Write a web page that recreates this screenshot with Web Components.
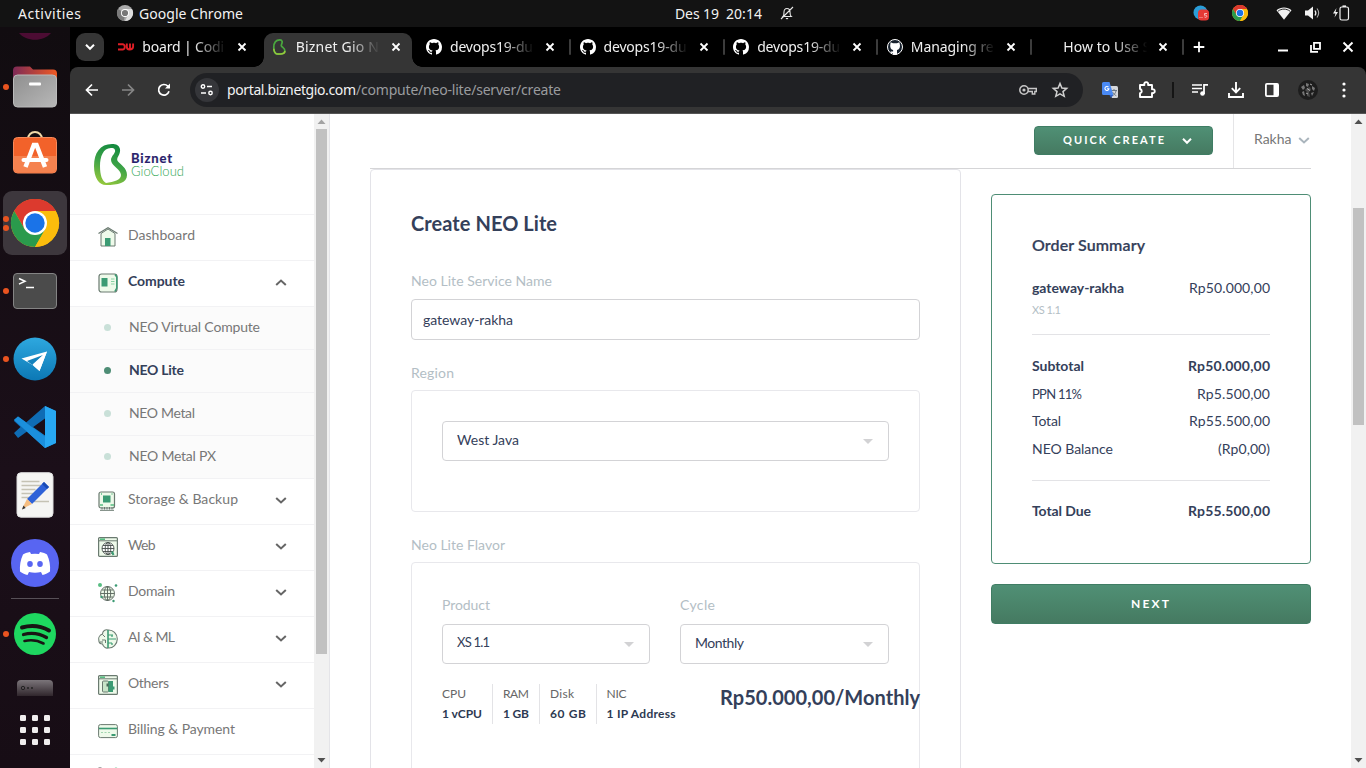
<!DOCTYPE html>
<html lang="id">
<head>
<meta charset="utf-8">
<title>Biznet Gio NEO Lite</title>
<style>
html,body{margin:0;height:100%;overflow:hidden;background:#fff}
body{font-family:Lato,"Liberation Sans",sans-serif;font-size:14px}
</style>
</head>
<body>
<desk-top></desk-top>
<script>
const define = (name, css, html) => {
  customElements.define(name, class extends HTMLElement {
    constructor() {
      super();
      const t = document.createElement('template');
      const markup = typeof html === 'function' ? html(this) : html;
      t.innerHTML = `<style>*{box-sizing:border-box}:host{box-sizing:border-box}svg{display:block;overflow:visible}${css}</style>${markup}`;
      this.attachShadow({mode: 'open'}).append(t.content.cloneNode(true));
    }
  });
};
const attr = (el, n, d = '') => el.getAttribute(n) ?? d;

/* ---------- icon library ---------- */
const wrap = (w, h, body, extra = '') => `<svg width="${w}" height="${h}" viewBox="0 0 ${w} ${h}" fill="none" ${extra}>${body}</svg>`;
const chromeMark = (s) => `<svg width="${s}" height="${s}" viewBox="0 0 48 48"><circle cx="24" cy="24" r="24" fill="#fbbc0c"/><path d="M24 24 3.2 12A24 24 0 0 1 44.8 12Z" fill="#dc3a2e"/><path d="M24 12H44.8A24 24 0 0 0 3.2 12L13.6 30Z" fill="#dc3a2e"/><path d="M3.2 12A24 24 0 0 0 24 48L34.4 30 24 36 13.6 30Z" fill="#2a9a4c"/><path d="M24 48A24 24 0 0 0 44.8 12H24L34.4 30Z" fill="#fbbc0c"/><circle cx="24" cy="24" r="12" fill="#fff"/><circle cx="24" cy="24" r="9.7" fill="#1a73e8"/></svg>`;
const octo = '<path fill="#fff" d="M8 0C3.58 0 0 3.58 0 8c0 3.54 2.29 6.53 5.47 7.59.4.07.55-.17.55-.38 0-.19-.01-.82-.01-1.49-2.01.37-2.53-.49-2.69-.94-.09-.23-.48-.94-.82-1.13-.28-.15-.68-.52-.01-.53.63-.01 1.08.58 1.23.82.72 1.21 1.87.87 2.33.66.07-.52.28-.87.51-1.07-1.78-.2-3.64-.89-3.64-3.95 0-.87.31-1.59.82-2.15-.08-.2-.36-1.02.08-2.12 0 0 .67-.21 2.2.82.64-.18 1.32-.27 2-.27s1.36.09 2 .27c1.53-1.04 2.2-.82 2.2-.82.44 1.1.16 1.92.08 2.12.51.56.82 1.27.82 2.15 0 3.07-1.87 3.75-3.65 3.95.29.25.54.73.54 1.48 0 1.07-.01 1.93-.01 2.2 0 .21.15.46.55.38A8.01 8.01 0 0 0 16 8c0-4.42-3.58-8-8-8Z"/>';
const G = '#3b9b73', P = '#eefaea', K = '#6a7a70';
const icons = {
  close: wrap(10, 10, '<path d="M1.5 1.5l7 7M8.5 1.5l-7 7" stroke="#fff" stroke-width="1.8"/>'),
  close12: wrap(12, 12, '<path d="M1.5 1.5l9 9M10.5 1.5l-9 9" stroke="#fff" stroke-width="1.9"/>'),
  plus: wrap(12, 12, '<path d="M6 .7v10.600M.7 6h10.600" stroke="#fff" stroke-width="1.8"/>'),
  dw: wrap(16, 16, '<path d="M0 5.3h4.5a2.1 2.1 0 0 1 2.2 2.2v.8a2.1 2.1 0 0 1-2.2 2.2H0M8.8 4.5v3.3c0 2 .6 2.7 2.6 2.7s3.7-.7 3.7-2.7V4.5M12 4.5v5" stroke="#e01e26" stroke-width="1.9"/>'),
  octo: wrap(16, 16, octo),
  octo2: wrap(16, 16, '<circle cx="8" cy="8" r="7.5" fill="#16202c" stroke="#fff"/><path fill="#fff" d="M3.6 3.2 6 4.2h4l2.4-1 .6 3.300c0 2.700-1 4-3 4.500v4.700H6v-1.600H4.400l-.9-1.500h2.600v-1.600C4 10.500 3.100 8.800 3.200 6.500Z"/>'),
  biz: '<svg width="13" height="16" viewBox="0 0 34 41"><path d="M18 2C7 2 2 11 2 22s4 17 10 17c10 0 19-2 19-9 0-6-6-8-9-12-2-4 3-6 2-12-1-3-3-4-6-4Z" fill="none" stroke="#4aa83f" stroke-width="4.500"/><path d="M2 25c1 8 4 14 11 14s19 0 18-8" fill="none" stroke="#96c83c" stroke-width="4"/></svg>',
  down: wrap(10, 6, '<path d="M1 .8l4 4 4-4" stroke="currentColor" stroke-width="2"/>'),
  down12: wrap(12, 7, '<path d="M1.200 1l4.800 4.500L10.800 1" stroke="currentColor" stroke-width="2"/>'),
  up12: wrap(12, 7, '<path d="M1.200 6l4.800-4.500L10.800 6" stroke="currentColor" stroke-width="2"/>'),
  back: wrap(14, 14, '<path d="M13 7H2M7 1.500 1.500 7 7 12.500" stroke="#fff" stroke-width="1.7"/>'),
  fwd: wrap(14, 14, '<path d="M1 7h11M7 1.500 12.500 7 7 12.500" stroke="#868686" stroke-width="1.7"/>'),
  reload: wrap(14, 14, '<path d="M12 8.300A5.300 5.300 0 1 1 10.800 3.200L12.200 4.600" stroke="#fff" stroke-width="1.700"/><path d="M13 .5v5H8Z" fill="#fff"/>'),
  tune: wrap(14, 12, '<circle cx="3" cy="2.500" r="1.700" stroke="#fff" stroke-width="1.400"/><path d="M7 2.500h5M1 9h5" stroke="#fff" stroke-width="1.700"/><circle cx="10.500" cy="9" r="1.700" stroke="#fff" stroke-width="1.400"/>'),
  key: wrap(18, 11, '<circle cx="5" cy="5" r="4.200" stroke="#c7c7c7" stroke-width="1.500"/><circle cx="5" cy="5" r="1.600" fill="#c7c7c7"/><path d="M9 3.500h8.300v3H15.800V9h-2.500V6.500H9" stroke="#c7c7c7" stroke-width="1.400"/>'),
  star: wrap(16, 16, '<path d="M8 1.500 9.900 6l4.800.4-3.700 3.200 1.200 4.700L8 11.800l-4.200 2.500L5 9.600 1.300 6.400 6.100 6Z" stroke="#d0d0d0" stroke-width="1.500"/>'),
  translate: wrap(16, 16, '<path d="M6 4h8.500a1.500 1.500 0 0 1 1.500 1.500V14.500a1.500 1.500 0 0 1-1.500 1.500H10Z" fill="#d6d8dc"/><path d="M9 8.500h6M12 7v1.500M14 9c-.5 2.300-2 4-3.700 4.700M10.500 10c1 2 2.300 3 3.800 3.700" stroke="#6e7a87" stroke-width="1"/><path d="M1.500 0H7.500l3.800 13H1.500A1.500 1.500 0 0 1 0 11.500v-10A1.500 1.500 0 0 1 1.500 0Z" fill="#4a8af4"/><path d="M7.500 13h3.800L9 16Z" fill="#2e62c8"/><path d="M6.500 5.200A2 2 0 1 0 6.900 6.800H5" stroke="#fff" stroke-width="1.100"/>'),
  puzzle: wrap(18, 18, '<path d="M2 4h4.400a2 2 0 1 1 3.600 0H14v4.300a2 2 0 1 1 0 3.700V16H2v-3.700a2.200 2.200 0 0 0 0-4.300Z" stroke="#fff" stroke-width="1.900" stroke-linejoin="round"/>'),
  queue: wrap(16, 14, '<path d="M0 2h10M0 5.500h10M0 9h6" stroke="#fff" stroke-width="1.700"/><path d="M12 11V1.800h4" stroke="#fff" stroke-width="1.800"/><circle cx="10.500" cy="10.500" r="2.300" fill="#fff"/>'),
  download: wrap(16, 16, '<path d="M8 0v10M3.800 6.200 8 10.400l4.200-4.200M1 11v4h14v-4" stroke="#fff" stroke-width="1.900"/>'),
  panel: wrap(14, 14, '<rect x=".9" y=".9" width="12.200" height="12.200" rx="1" stroke="#fff" stroke-width="1.800"/><path d="M8.500 1h4.500v12H8.500Z" fill="#fff"/>'),
  face: wrap(20, 20, '<circle cx="10" cy="10" r="10" fill="#1d1d1d"/><g fill="#777"><path d="M3 7l3-2 1 3-2 2ZM8 3l3 1-1 3-2-1ZM4 12l2-1 1 5-2-1ZM14 6l3 2-1 3-2-2ZM13 13l3-1-2 4Z"/></g><path d="M9 8l3-1 1 3-2 2 1 5-3-1v-4l-2-2Z" fill="#4a4a4a"/><path d="M9 8.500l3 2M12 4l2 1M8 13l2 1" stroke="#aaa"/>'),
  dots: wrap(4, 16, '<g fill="#fff"><circle cx="2" cy="2" r="1.600"/><circle cx="2" cy="8" r="1.600"/><circle cx="2" cy="14" r="1.600"/></g>'),
  min: wrap(10, 12, '<path d="M0 9.500h10" stroke="#fff" stroke-width="2"/>'),
  restore: wrap(11, 11, '<path d="M4 .9h6v6H4ZM1 3v6.900h7" stroke="#fff" stroke-width="1.800"/>'),
  bell: wrap(14, 14, '<path d="M3 10.500c1-1 1-2 1-4.500 0-2 1-3.500 3-3.500s3 1.500 3 3.500c0 2.500 0 3.500 1.200 4.500ZM1 13 13 1" stroke="#e8e8e8" stroke-width="1.100"/><path d="M5.500 12h3L7 13.500Z" fill="#fff"/>'),
  gray: wrap(16, 16, '<circle cx="8" cy="8" r="8" fill="#aaa"/><path d="M8 8 1 4a8 8 0 0 0 6 12Z" fill="#7a7a7a"/><path d="M8 4h7a8 8 0 0 1-7 12l3-6Z" fill="#ddd"/><circle cx="8" cy="8" r="4" fill="#fff"/><circle cx="8" cy="8" r="3.100" fill="#777"/>'),
  msg: wrap(16, 16, '<circle cx="7.500" cy="7.500" r="7" fill="#2a9dd8"/><rect x="5" y="4.500" width="11" height="11" rx="3.500" fill="#e53935"/><path d="M6.500 12.500h1M8.500 12.500h1M14 8.500h-2.500v1.800c1.800-.4 2.500.2 2.300 1.200-.3 1-1.300 1-2.300.5" stroke="#ffd5d5" stroke-width=".8"/>'),
  chrome16: chromeMark(16),
  wifi: wrap(16, 13, '<path d="M.5 3.300C4.500-.3 11.500-.3 15.500 3.300L8 12.700Z" fill="#f2f2f2"/><path d="M2 4.200c3.600-2.800 8.400-2.800 12 0" stroke="#131313" stroke-width=".9"/>'),
  vol: wrap(16, 14, '<path d="M0 4.500h3L8 .5v13l-5-4H0Z" fill="#f2f2f2"/><path d="M10 4.500c1 1.500 1 3.500 0 5" stroke="#f2f2f2" stroke-width="1.300"/><path d="M12 2.500c2 2.700 2 6.300 0 9" stroke="#aaa" stroke-width="1.100"/>'),
  batt: wrap(16, 16, '<path d="M3.500 3 0 8.500h2.500L1.500 12.500 5 7H2.500Z" fill="#f2f2f2"/><rect x="7" y="2" width="8.500" height="13" rx="1.800" stroke="#f2f2f2" stroke-width="1.200"/><path d="M9.500 1.200h3.500" stroke="#f2f2f2" stroke-width="1.600"/>'),
  home: wrap(20, 20, `<path d="M3 6.500 10 2l7 4.500V19H3Z" fill="${P}" stroke="${K}" stroke-width="1"/><path d="M.5 6.500 10 .7l9.500 5.800" stroke="${K}" stroke-width="1.200"/><path d="M7 11h5.500v8H7Z" fill="${G}"/>`),
  compute: wrap(20, 20, `<rect x="1" y="1" width="18" height="18" rx="2.500" fill="${P}" stroke="${K}" stroke-width="1.200"/><path d="M3.500 5H9.500V13.500H3.500Z" fill="${G}"/><path d="M13 6h3.500M13 8.500h3.500M13 11h3.500" stroke="#8ad2a4"/><path d="M17 1.500 18.800 4v11l-2 3.500" stroke="${G}" stroke-width="1.500"/>`),
  storage: wrap(20, 20, `<rect x="1" y="1" width="15.500" height="16" rx="2" fill="${P}" stroke="${K}" stroke-width="1.200"/><path d="M5 4.500h7.500v7H5Z" fill="${G}"/><path d="M4 18.500v-2.500M6.500 18.500V16M9 18.500V16M11.500 18.500V16M14 18.500V16M2 19.300h14" stroke="${K}"/><path d="M2 14h3M12.500 14H16M3 3h1M13.500 3h1" stroke="#58bd82" stroke-width="1.500"/>`),
  web: wrap(20, 20, `<rect x=".6" y=".6" width="18.800" height="18.800" rx="1" fill="${P}" stroke="${K}" stroke-width="1.200"/><path d="M1 3.800h18" stroke="${K}"/><path d="M2 2.200h5" stroke="#58bd82" stroke-width="1.600"/><g stroke="#454d49" stroke-width=".9"><circle cx="10" cy="11.500" r="6" fill="#fff"/><ellipse cx="10" cy="11.500" rx="2.800" ry="6"/><path d="M4 11.500h12M5 8.500h10M5 14.500h10M10 5.500v12"/></g><path d="M14 14.500 15.500 18" stroke="${G}" stroke-width="2"/>`),
  domain: wrap(20, 20, `<g stroke="#56625a" stroke-width=".9"><circle cx="9.500" cy="10.500" r="7" fill="${P}"/><ellipse cx="9.500" cy="10.500" rx="3.200" ry="7"/><path d="M2.500 10.500h14M4 7h11M4 14h11M9.500 3.500v14"/></g><circle cx="2" cy="2" r="2" fill="#58bd82"/><circle cx="18" cy="2.500" r="1.300" fill="${G}"/><circle cx="15.500" cy="18" r="1.200" fill="${G}"/><circle cx="3.500" cy="14" r="1.200" fill="${G}"/>`),
  brain: wrap(20, 20, `<path d="M10 1C7.500 0 4.500 2 4.500 5 2 6 0 8.500.800 11c0 2 1.200 4 3.700 4 1 3 3.500 4.500 5.500 4 5 .5 9.300-4 9.300-9S15 .5 10 1Z" fill="${P}" stroke="${K}" stroke-width="1.100"/><path d="M10 1v18" stroke="${G}" stroke-width="1.600"/><path d="M10 6h5M10 10h8M10 14h4M14 6v2M14 14v2" stroke="${G}" stroke-width="1.200"/><path d="M4.500 5.500 7 8M4 11h3.500v3M2 13h3" stroke="${K}"/>`),
  others: wrap(20, 20, `<rect x=".6" y=".6" width="18.800" height="18.800" rx="1" fill="${P}" stroke="${K}" stroke-width="1.200"/><path d="M1 3.800h18" stroke="${K}"/><path d="M2 2.200h5" stroke="#58bd82" stroke-width="1.600"/><rect x="4.500" y="6" width="6" height="11" rx="1" fill="#c8e5c8" stroke="${K}"/><path d="M10.500 6h4.500v5.500h1.500v3H15V17h-4.500Z" fill="${G}"/><path d="M8.500 8.500h2v3h-2Z" fill="#476b58"/>`),
  card: wrap(20, 20, `<rect x=".6" y="3.600" width="18.800" height="13" rx="1.800" fill="${P}" stroke="${K}" stroke-width="1"/><path d="M1 7.500h18" stroke="${G}" stroke-width="1.600"/><path d="M3 11.500h9" stroke="#a2d6b0" stroke-dasharray="2 1.500"/><path d="M13.500 14h4" stroke="${G}" stroke-width="2"/>`),
  cart: wrap(20, 20, `<path d="M.5 1h3l2 7" stroke="#555"/><circle cx="18" cy="2" r="1.600" fill="#58bd82"/>`),
  folder: wrap(46, 42, '<defs><linearGradient id="a"><stop stop-color="#7d2a56"/><stop offset="1" stop-color="#ef5a24"/></linearGradient><linearGradient id="b" x2="1" y2="1"><stop stop-color="#8f8f8f"/><stop offset="1" stop-color="#b8b8b8"/></linearGradient></defs><path d="M1 4.500a4 4 0 0 1 4-4h13l3 3h20a4 4 0 0 1 4 4v12H1Z" fill="url(#a)"/><rect x="1.500" y="9" width="43" height="32" rx="4" fill="url(#b)" stroke="#bbb"/><rect x="17" y="16.500" width="12" height="3" rx="1" fill="#fff"/>'),
  store: wrap(46, 50, '<path d="M16 9a7 7 0 0 1 14 0" stroke="#f0d8a8" stroke-width="2"/><rect x="1.500" y="7.500" width="43" height="35.500" rx="4" fill="#f2622a" stroke="#f88a5a"/><path d="M2 26h42v12.500a4 4 0 0 1-4 4H6a4 4 0 0 1-4-4Z" fill="#f5824f"/><path d="M13.500 37 21.800 15h2.700L33 37" stroke="#fff" stroke-width="4.500"/><path d="M11.500 30h23" stroke="#fff" stroke-width="4" stroke-linecap="round"/>'),
  chrome: chromeMark(48),
  term: wrap(46, 38, '<rect x="1.500" y="1.500" width="43" height="35" rx="3.500" fill="#4b4b4b" stroke="#848484"/><path d="M7 6.500l6 2.800-6 2.800M14 15.500h8" stroke="#fff" stroke-width="1.500"/>'),
  tele: wrap(44, 44, '<defs><linearGradient id="t" x2="0" y2="1"><stop stop-color="#2ea8df"/><stop offset="1" stop-color="#0c78b5"/></linearGradient></defs><circle cx="22" cy="22" r="21.500" fill="url(#t)"/><path d="M8.500 21.500 34 14.500 26.500 34l-7-6Z" fill="#fff"/><path d="M14 24 30 18 20 28.500Z" fill="#1683bd"/><path d="M19.500 27.500 34 14.500 26.500 34Z" fill="#fff"/>'),
  code: wrap(42, 42, '<path d="M31 0 42 5v32l-11 5L4.500 18 0 14l4-3.500L31 29.500Z" fill="#1583cd"/><path d="M31 0 11.500 17 4 12 0 15l6.500 6L0 27l4 5L31 12.500Z" fill="#0f6cb4"/><path d="M0 14 4 10.500 31 31v11Z" fill="#1b8fdc"/><path d="M31 0 42 5v32l-11 5Z" fill="#28a8f2"/>'),
  edit: wrap(38, 46, '<rect x="1" y=".7" width="36" height="44.500" rx="4" fill="#f5f5f3" stroke="#ddd"/><path d="M5.500 9.500h18M5.500 13.500h20M5.500 17.500h14M5.500 21.500h12M5.500 25.500h9M18 29.500h15" stroke="#c5c2b4" stroke-width="1.500"/><path d="M11 27 28 10l5 5-17 17Z" fill="#2f62d8"/><path d="M28 10l5 5-2 2-5-5Z" fill="#184bb5"/><path d="M11 27l5 5-10 5Z" fill="#f5bd80"/><path d="M7.500 33.500 6 37.500l3.700-1.500Z" fill="#333"/>'),
  discord: wrap(48, 48, '<circle cx="24" cy="24" r="24" fill="#5865f2"/><path d="M19 13c-3 .4-5.500 1.500-7 2.500-2.500 5-3.500 11-3 17 2.500 2 5 3 7.500 3.500l1.500-3q6 1.500 12 0l1.500 3c2.500-.5 5-1.500 7.500-3.500.5-6-.5-12-3-17-1.500-1-4-2.100-7-2.500l-1 2q-4-.6-8 0Z" fill="#fff"/><ellipse cx="19" cy="25" rx="2.800" ry="3" fill="#5865f2"/><ellipse cx="29" cy="25" rx="2.800" ry="3" fill="#5865f2"/>'),
  spotify: wrap(42, 42, '<circle cx="21" cy="21" r="21" fill="#1ed760"/><path d="M8 14.500c9-2.500 19-1.500 27 3" stroke="#191414" stroke-width="4" stroke-linecap="round"/><path d="M9.500 21.500c8-2 16-1 23 3" stroke="#191414" stroke-width="3.300" stroke-linecap="round"/><path d="M10.500 28c7-1.500 13-.8 19 2.500" stroke="#191414" stroke-width="2.600" stroke-linecap="round"/>'),
  drive: wrap(36, 16, '<defs><linearGradient id="d" x2="0" y2="1"><stop stop-color="#7b757a"/><stop offset="1" stop-color="#30262c"/></linearGradient></defs><path d="M0 16V4a4 4 0 0 1 4-4h28a4 4 0 0 1 4 4v12Z" fill="url(#d)"/><circle cx="6" cy="8" r="1.700" stroke="#222"/><circle cx="11" cy="8" r="1" fill="#222"/><circle cx="15" cy="8" r="1" fill="#222"/>'),
  apps: wrap(30, 30, '<g fill="#f0eeee">' + [0, 12, 24].map(y => [0, 12, 24].map(x => `<rect x="${x}" y="${y}" width="6" height="6" rx="1.300"/>`).join('')).join('') + '</g>')
};
define('ui-icon', ':host{display:flex;align-items:center;justify-content:center;flex:none}', el => icons[attr(el, 'name')]);

/* ---------- desktop shell ---------- */
define('desk-top', `:host{display:grid;grid-template:27px 741px/70px 1296px;width:1366px;height:768px;overflow:hidden}
top-panel{grid-column:1/3}`,
`<top-panel></top-panel><app-dock></app-dock><browser-window></browser-window>`);

define('top-panel', `:host{display:grid;grid-template-columns:583px 200px 583px;background:#131313;color:#f2f2f2;font:14px "Noto Sans",sans-serif;height:27px;align-items:center;padding-bottom:1px}
div{display:flex;align-items:center}.l{padding-left:18px}.l ui-icon{margin:0 6px 0 36px}.c{padding-left:92px;width:240px;white-space:nowrap}.c ui-icon{margin-left:18px}
.r{justify-content:flex-end;padding-right:17px}`,
`<div class="l"><fit-text w="63">Activities</fit-text><ui-icon name="gray"></ui-icon><fit-text w="104">Google Chrome</fit-text></div>
<div class="c"><fit-text w="44">Des 19</fit-text><fit-text w="36" style="margin-left:7px">20:14</fit-text><ui-icon name="bell"></ui-icon></div>
<div class="r"><ui-icon name="msg"></ui-icon><ui-icon name="chrome16" style="margin-left:23px"></ui-icon><ui-icon name="wifi" style="margin-left:28px"></ui-icon><ui-icon name="vol" style="margin-left:13px"></ui-icon><ui-icon name="batt" style="margin-left:12px"></ui-icon></div>`);

define('dock-item', `:host{display:flex;height:68px;width:70px;align-items:center;flex:none}
.dots{width:3px;height:64px;display:flex;flex-direction:column;justify-content:center;gap:3px}
i{width:6px;height:6px;border-radius:50%;background:#e95420;margin-left:3px;flex:none;z-index:1}
.tile{width:64px;height:64px;border-radius:9px;display:flex;align-items:center;justify-content:center}
:host([active]) .tile{background:#3d373d}`,
el => `<div class="dots">${'<i></i>'.repeat(+attr(el, 'dots', '0'))}</div><div class="tile"><ui-icon name="${attr(el, 'icon')}"></ui-icon></div>`);

define('app-dock', `:host{display:flex;flex-direction:column;background:linear-gradient(#110c10,#1b0f19 60%,#170d15);overflow:hidden}
.top{height:26px;padding:6px 0 0 19px;flex:none}hr{width:48px;height:1px;border:0;background:#575057;margin:1px 11px;flex:none}
.drive{height:28px;padding:12px 0 0 17px;flex:none}.drive ui-icon{justify-content:flex-start}`,
`<div class="top"><svg width="32" height="8"><path d="M0 0h32c-7 9-25 9-32 0Z" fill="#4c0c33"/></svg></div>
<dock-item icon="folder" dots="1"></dock-item><dock-item icon="store"></dock-item><dock-item icon="chrome" dots="2" active></dock-item><dock-item icon="term" dots="1"></dock-item><dock-item icon="tele" dots="1"></dock-item><dock-item icon="code"></dock-item><dock-item icon="edit"></dock-item><dock-item icon="discord"></dock-item><hr><dock-item icon="spotify" dots="1"></dock-item><div class="drive"><ui-icon name="drive"></ui-icon></div><dock-item icon="apps"></dock-item>`);

/* ---------- browser chrome ---------- */
define('browser-window', `:host{display:grid;grid-template-rows:40px 47px 654px;background:#000;overflow:hidden}`,
`<tab-strip></tab-strip><tool-bar></tool-bar><portal-page></portal-page>`);

define('browser-tab', `:host{display:flex;align-items:center;width:153.600px;height:34px;padding:0 0 6px 8px;flex:none;color:#f0f0f0;position:relative}
.icon{width:16px;height:16px;display:flex;justify-content:center;margin-right:8px}.title{width:86px;height:24px;line-height:24px;overflow:hidden;-webkit-mask:linear-gradient(90deg,#000 60%,transparent 98%)}
.x{margin-left:9px}.sep{width:2px;height:16px;background:#3c3c3c;margin-left:14px;border-radius:1px}
:host([active]){background:#353535;border-radius:9px 9px 0 0;width:148px;margin-right:6.200px}
:host([active])::before,:host([active])::after{content:"";position:absolute;bottom:0;width:10px;height:10px}
:host([active])::before{left:-10px;background:radial-gradient(circle at 0 0,transparent 9.500px,#353535 10px)}
:host([active])::after{right:-10px;background:radial-gradient(circle at 100% 0,transparent 9.500px,#353535 10px)}`,
el => `<div class="icon">${attr(el, 'icon') ? `<ui-icon name="${attr(el, 'icon')}"></ui-icon>` : ''}</div><div class="title"><slot></slot></div><ui-icon class="x" name="close"></ui-icon>${el.hasAttribute('sep') ? '<span class="sep"></span>' : ''}`);

define('tab-strip', `:host{display:flex;padding:6px 0 0 6px;font:14px "Noto Sans",sans-serif;background:#000}
.menu{width:28px;height:28px;border-radius:9px;background:#353535;display:flex;align-items:center;justify-content:center;color:#fff;margin-right:6.200px;flex:none}
.plus{height:28px;margin-left:8px}.win{display:flex;align-items:center;height:28px;margin-left:auto;padding-right:12px;gap:21.500px}`,
`<div class="menu"><ui-icon name="down"></ui-icon></div>
<browser-tab icon="dw"><fit-text w="82">board | Codi</fit-text></browser-tab>
<browser-tab icon="biz" active><fit-text w="83">Biznet Gio N</fit-text></browser-tab>
<browser-tab icon="octo" sep><fit-text w="83">devops19-du</fit-text></browser-tab>
<browser-tab icon="octo" sep><fit-text w="83">devops19-du</fit-text></browser-tab>
<browser-tab icon="octo" sep><fit-text w="83">devops19-du</fit-text></browser-tab>
<browser-tab icon="octo2" sep><fit-text w="83">Managing re</fit-text></browser-tab>
<browser-tab sep style="margin-left:-1px"><fit-text w="87">How to Use S</fit-text></browser-tab>
<ui-icon class="plus" name="plus"></ui-icon>
<div class="win"><ui-icon name="min"></ui-icon><ui-icon name="restore"></ui-icon><ui-icon name="close12"></ui-icon></div>`);

define('tool-bar', `:host{display:flex;align-items:center;background:#353535;border-bottom:1px solid #555;border-radius:8px 8px 0 0;padding-left:15px;font:14px "Noto Sans",sans-serif}
.omni{width:893px;height:34px;border-radius:17px;background:#202124;margin:0 27px 0 19px;padding:0 15px 0 5px;display:flex;align-items:center;flex:none}
.site{width:24px;height:24px;border-radius:50%;background:#35363a;display:flex;align-items:center;justify-content:center;margin-right:8px}
.host,.path{margin-top:-2px}.host{color:#f2f2f2}.path{color:#9a9c9f}.key{margin:0 15px 0 auto}b{width:2px;height:16px;background:#151515;flex:none}`,
`<ui-icon name="back"></ui-icon><ui-icon name="fwd" style="margin:0 22px"></ui-icon><ui-icon name="reload"></ui-icon>
<div class="omni"><div class="site"><ui-icon name="tune"></ui-icon></div><fit-text class="host" w="129">portal.biznetgio.com</fit-text><fit-text class="path" w="205">/compute/neo-lite/server/create</fit-text><ui-icon class="key" name="key"></ui-icon><ui-icon name="star"></ui-icon></div>
<ui-icon name="translate" style="margin-left:-8px"></ui-icon><ui-icon name="puzzle" style="margin:0 16px 0 20px"></ui-icon><b></b><ui-icon name="queue" style="margin-left:18px"></ui-icon><ui-icon name="download" style="margin-left:20px"></ui-icon><ui-icon name="panel" style="margin:0 19px 0 21px"></ui-icon><ui-icon name="face"></ui-icon><ui-icon name="dots" style="margin-left:24px"></ui-icon>`);

/* ---------- portal page ---------- */
define('scroll-rail', `:host{display:flex;flex-direction:column;align-items:center;background:#f1f1f1;justify-content:space-between}
.thumb{background:#c1c1c1;width:11px;margin-right:1px}svg{flex:none}`,
el => `<svg width="15" height="15"><path d="M3.500 10h8l-4-4.500Z" fill="${attr(el, 'tip', '#505050')}"/></svg><div style="flex:1;width:11px;padding-top:${attr(el, 'top')}px;margin-right:1px"><div class="thumb" style="height:${attr(el, 'size')}px"></div></div><svg width="15" height="15"><path d="M3.500 5h8l-4 4.500Z" fill="#505050"/></svg>`);

define('portal-page', `:host{display:grid;grid-template-columns:244px 16px 1021px 15px;height:654px;background:#fff;overflow:hidden}
.s{border-right:1px solid #e4e4e8}`,
`<side-nav></side-nav><scroll-rail class="s" top="0" size="525" tip="#a3a3a3"></scroll-rail><main-area></main-area><scroll-rail top="79" size="217"></scroll-rail>`);

define('nav-row', `:host{display:flex;height:46px;border-top:1px solid #f2f2f4;align-items:center;padding:0 27px 7px 28px;color:#777;flex:none;font-size:14px}
:host([sub]){height:43px;background:#fbfbfb;padding:0 0 3px 34px}
:host([bold]){color:#34405a;font-weight:700}
.ico{width:20px;margin-right:10px;height:20px;margin-top:5px}i{width:7px;height:7px;border-radius:50%;background:#c9e0d8;margin:2px 18px 0 0}
:host([sub][bold]) i{background:#4e8d75}.ch{margin-left:auto;color:#666;margin-top:5px}`,
el => (el.hasAttribute('sub') ? '<i></i>' : `<ui-icon class="ico" name="${attr(el, 'icon')}"></ui-icon>`) + '<slot></slot>' + (attr(el, 'arrow') ? `<ui-icon class="ch" name="${attr(el, 'arrow')}"></ui-icon>` : ''));

define('brand-logo', `:host{display:flex;height:100px;padding:30px 0 0 24px;flex:none}
div{display:flex;flex-direction:column;padding:7px 0 0 3px}.a{font:700 13px/14px Lato,sans-serif;color:#29216b;-webkit-text-stroke:.2px #29216b}.b{font:300 13px/13px Lato,sans-serif;color:#31a653}`,
`<svg width="34" height="41" viewBox="0 0 34 41"><defs><linearGradient id="l" x1=".6" x2=".3" y2="1"><stop stop-color="#12893f"/><stop offset=".5" stop-color="#3fa447"/><stop offset="1" stop-color="#96c83c"/></linearGradient></defs><path fill-rule="evenodd" d="M18 0C6 0 0 9 0 22c0 12 5 19 12 19 12 0 21-2 21-10 0-7-6-10-9-13.500C21 14 27 11 26 5 25 1 22 0 18 0ZM17 4C9 4 6 13 6 22s2 15 6 17c8-1 15-3 15-8 0-6-10-9-10-15 0-4 5-7 4-10-1-2-2-2-4-2Z" fill="url(#l)"/></svg>
<div><fit-text class="a" w="41">Biznet</fit-text><fit-text class="b" w="53">GioCloud</fit-text></div>`);

define('side-nav', `:host{display:flex;flex-direction:column;background:#fff;overflow:hidden}`,
`<brand-logo></brand-logo>
<nav-row icon="home"><fit-text w="67">Dashboard</fit-text></nav-row>
<nav-row icon="compute" arrow="up12" bold><fit-text w="57">Compute</fit-text></nav-row>
<nav-row sub><fit-text w="131">NEO Virtual Compute</fit-text></nav-row>
<nav-row sub bold><fit-text w="55">NEO Lite</fit-text></nav-row>
<nav-row sub><fit-text w="66">NEO Metal</fit-text></nav-row>
<nav-row sub><fit-text w="87">NEO Metal PX</fit-text></nav-row>
<nav-row icon="storage" arrow="down12"><fit-text w="110">Storage &amp; Backup</fit-text></nav-row>
<nav-row icon="web" arrow="down12"><fit-text w="27.500">Web</fit-text></nav-row>
<nav-row icon="domain" arrow="down12"><fit-text w="47">Domain</fit-text></nav-row>
<nav-row icon="brain" arrow="down12"><fit-text w="47">AI &amp; ML</fit-text></nav-row>
<nav-row icon="others" arrow="down12"><fit-text w="41">Others</fit-text></nav-row>
<nav-row icon="card"><fit-text w="107">Billing &amp; Payment</fit-text></nav-row>
<nav-row icon="cart"></nav-row>`);

define('page-header', `:host{display:flex;height:55px;border-bottom:1px solid #d5d5d7;margin:0 40px;justify-content:flex-end}
.quick{width:179px;height:29px;margin:12px 20px 0 0;border-radius:4px;border:1px solid #3f7d64;background:linear-gradient(#509075,#457a61);color:#fff;font:700 11px/27px Lato,sans-serif;display:flex;align-items:center;padding:0 0 2px 28.500px}
.quick ui-icon{margin:2px 0 0 17.500px}.user{border-left:1px solid #e5e5e7;padding:0 1px 5px 20.500px;display:flex;align-items:center;color:#777}.user ui-icon{color:#aab5bd;margin:4px 0 0 6.500px}`,
`<div class="quick"><fit-text w="101">QUICK CREATE</fit-text><ui-icon name="down"></ui-icon></div><div class="user"><fit-text w="37.500">Rakha</fit-text><ui-icon name="down12"></ui-icon></div>`);

define('form-label', `:host{display:block;font-size:14px;line-height:18px;color:#b3bec5;height:18px}`, `<slot></slot>`);
define('select-box', `:host{display:flex;height:40px;border:1px solid #d3d3d6;border-radius:4px;align-items:center;justify-content:space-between;padding:0 15px 4px 14px;color:#34405a;background:#fff}svg{margin-top:4px}`,
`<slot></slot><svg width="10" height="5"><path d="M0 0h10L5 5Z" fill="#d2d2d4"/></svg>`);
define('spec-cell', `:host{display:flex;flex-direction:column;height:40px;font-size:12px;line-height:20px;padding:0 10px;border-left:1px solid #e3e3e6;color:#666}
:host(:first-child){border:0;padding-left:0}::slotted([slot=value]){font-weight:700;color:#2d3a52}`,
`<slot></slot><slot name="value"></slot>`);

define('create-form', `:host{display:flex;flex-direction:column;width:591px;height:610px;border:1px solid #e3e3e8;border-radius:4px;padding:39px 40px 0;flex:none;color:#34405a}
h1{margin:0;font:700 20px/28px Lato,sans-serif;height:28px}
.input{height:41px;border:1px solid #d3d3d6;border-radius:4px;margin-top:9px;padding:0 11px 1px;display:flex;align-items:center;flex:none}
.box{border:1px solid #e8e8ec;border-radius:4px;padding:30px;flex:none}.region{height:122px;margin-top:8px}.flavor{height:240px;margin-top:8px;padding-top:33px}
.pair{display:grid;grid-template-columns:208px 209px;gap:30px}.pair select-box{margin-top:10px}.narrow{font-size:13px}
.spec{display:flex;margin-top:20px;white-space:nowrap;width:478px}.price{font:700 20px/27px Lato,sans-serif;margin-left:auto;flex:none}`,
`<h1><fit-text w="146">Create NEO Lite</fit-text></h1>
<form-label style="margin-top:35px"><fit-text w="141">Neo Lite Service Name</fit-text></form-label>
<div class="input"><fit-text w="90">gateway-rakha</fit-text></div>
<form-label style="margin-top:24px"><fit-text w="43">Region</fit-text></form-label>
<div class="box region"><select-box><fit-text w="62">West Java</fit-text></select-box></div>
<form-label style="margin-top:24px"><fit-text w="94">Neo Lite Flavor</fit-text></form-label>
<div class="box flavor"><div class="pair">
<div><form-label><fit-text w="48">Product</fit-text></form-label><select-box><fit-text class="narrow" w="33">XS 1.1</fit-text></select-box></div>
<div><form-label><fit-text w="35">Cycle</fit-text></form-label><select-box><fit-text w="49">Monthly</fit-text></select-box></div></div>
<div class="spec">
<spec-cell><fit-text w="24">CPU</fit-text><fit-text slot="value" w="40">1 vCPU</fit-text></spec-cell>
<spec-cell><fit-text w="26">RAM</fit-text><fit-text slot="value" w="26">1 GB</fit-text></spec-cell>
<spec-cell><fit-text w="24">Disk</fit-text><fit-text slot="value" w="36">60 GB</fit-text></spec-cell>
<spec-cell style="padding-left:9.500px"><fit-text w="20">NIC</fit-text><fit-text slot="value" w="69">1 IP Address</fit-text></spec-cell>
<fit-text class="price" w="200">Rp50.000,00/Monthly</fit-text></div></div>`);

define('sum-line', `:host{display:flex;justify-content:space-between;line-height:20px;height:20px;color:#34405a;flex:none}:host([bold]){font-weight:700}`, `<slot></slot>`);

define('order-summary', `:host{display:flex;flex-direction:column;width:320px;height:430px;margin-top:25px}
.card{height:370px;border:1px solid #4e8d75;border-radius:4px;padding:39px 40px 0;display:flex;flex-direction:column;flex:none}
h2{margin:0;font:600 16px/22px Lato,sans-serif;color:#34405a;height:22px;-webkit-text-stroke:.2px #34405a}.sub{font-size:11px;line-height:16px;color:#b3bec5;margin-top:4px;height:16px}
hr{width:100%;height:1px;border:0;background:#e3e3e6;flex:none;margin:0}.narrow{font-size:13px}
.next{height:40px;margin-top:20px;border:1px solid #407d64;border-radius:4px;background:linear-gradient(#509075,#457a61);color:#fff;font:700 12px/38px Lato,sans-serif;text-align:center;padding-right:2px}`,
`<div class="card"><h2><fit-text w="113">Order Summary</fit-text></h2>
<sum-line style="margin-top:22px"><b><fit-text w="92">gateway-rakha</fit-text></b><fit-text w="81">Rp50.000,00</fit-text></sum-line>
<div class="sub"><fit-text w="29">XS 1.1</fit-text></div><hr style="margin-top:16px">
<sum-line bold style="margin-top:21px"><fit-text w="52">Subtotal</fit-text><fit-text w="82">Rp50.000,00</fit-text></sum-line>
<sum-line style="margin-top:8px"><fit-text class="narrow" w="50">PPN 11%</fit-text><fit-text w="73">Rp5.500,00</fit-text></sum-line>
<sum-line style="margin-top:7px"><fit-text w="29">Total</fit-text><fit-text w="81">Rp55.500,00</fit-text></sum-line>
<sum-line style="margin-top:8px"><fit-text w="81">NEO Balance</fit-text><fit-text w="52">(Rp0,00)</fit-text></sum-line>
<hr style="margin-top:21px"><sum-line bold style="margin-top:20px"><fit-text w="59">Total Due</fit-text><fit-text w="82">Rp55.500,00</fit-text></sum-line></div>
<div class="next"><fit-text w="38">NEXT</fit-text></div>`);

define('main-area', `:host{display:block;overflow:hidden}.cols{display:flex;justify-content:space-between;margin:0 40px}`,
`<page-header></page-header><div class="cols"><create-form></create-form><order-summary></order-summary></div>`);

/* Text run tracked out or in so that it fills the width given by w. Registered last, when all inherited fonts are in place. */
customElements.define('fit-text', class extends HTMLElement {
  constructor() {
    super();
    this.attachShadow({mode: 'open'}).innerHTML = '<style>:host{display:inline-block;white-space:nowrap;flex:none}</style><slot></slot>';
  }
  connectedCallback() {
    const w = +this.getAttribute('w'), n = this.textContent.length;
    const natural = this.firstChild ? (() => { const r = document.createRange(); r.selectNodeContents(this); return r.getBoundingClientRect().width; })() : w;
    this.style.letterSpacing = ((w - natural) / Math.max(1, n - 1)).toFixed(3) + 'px';
    this.style.width = w + 'px';
  }
});
</script>
</body>
</html>
